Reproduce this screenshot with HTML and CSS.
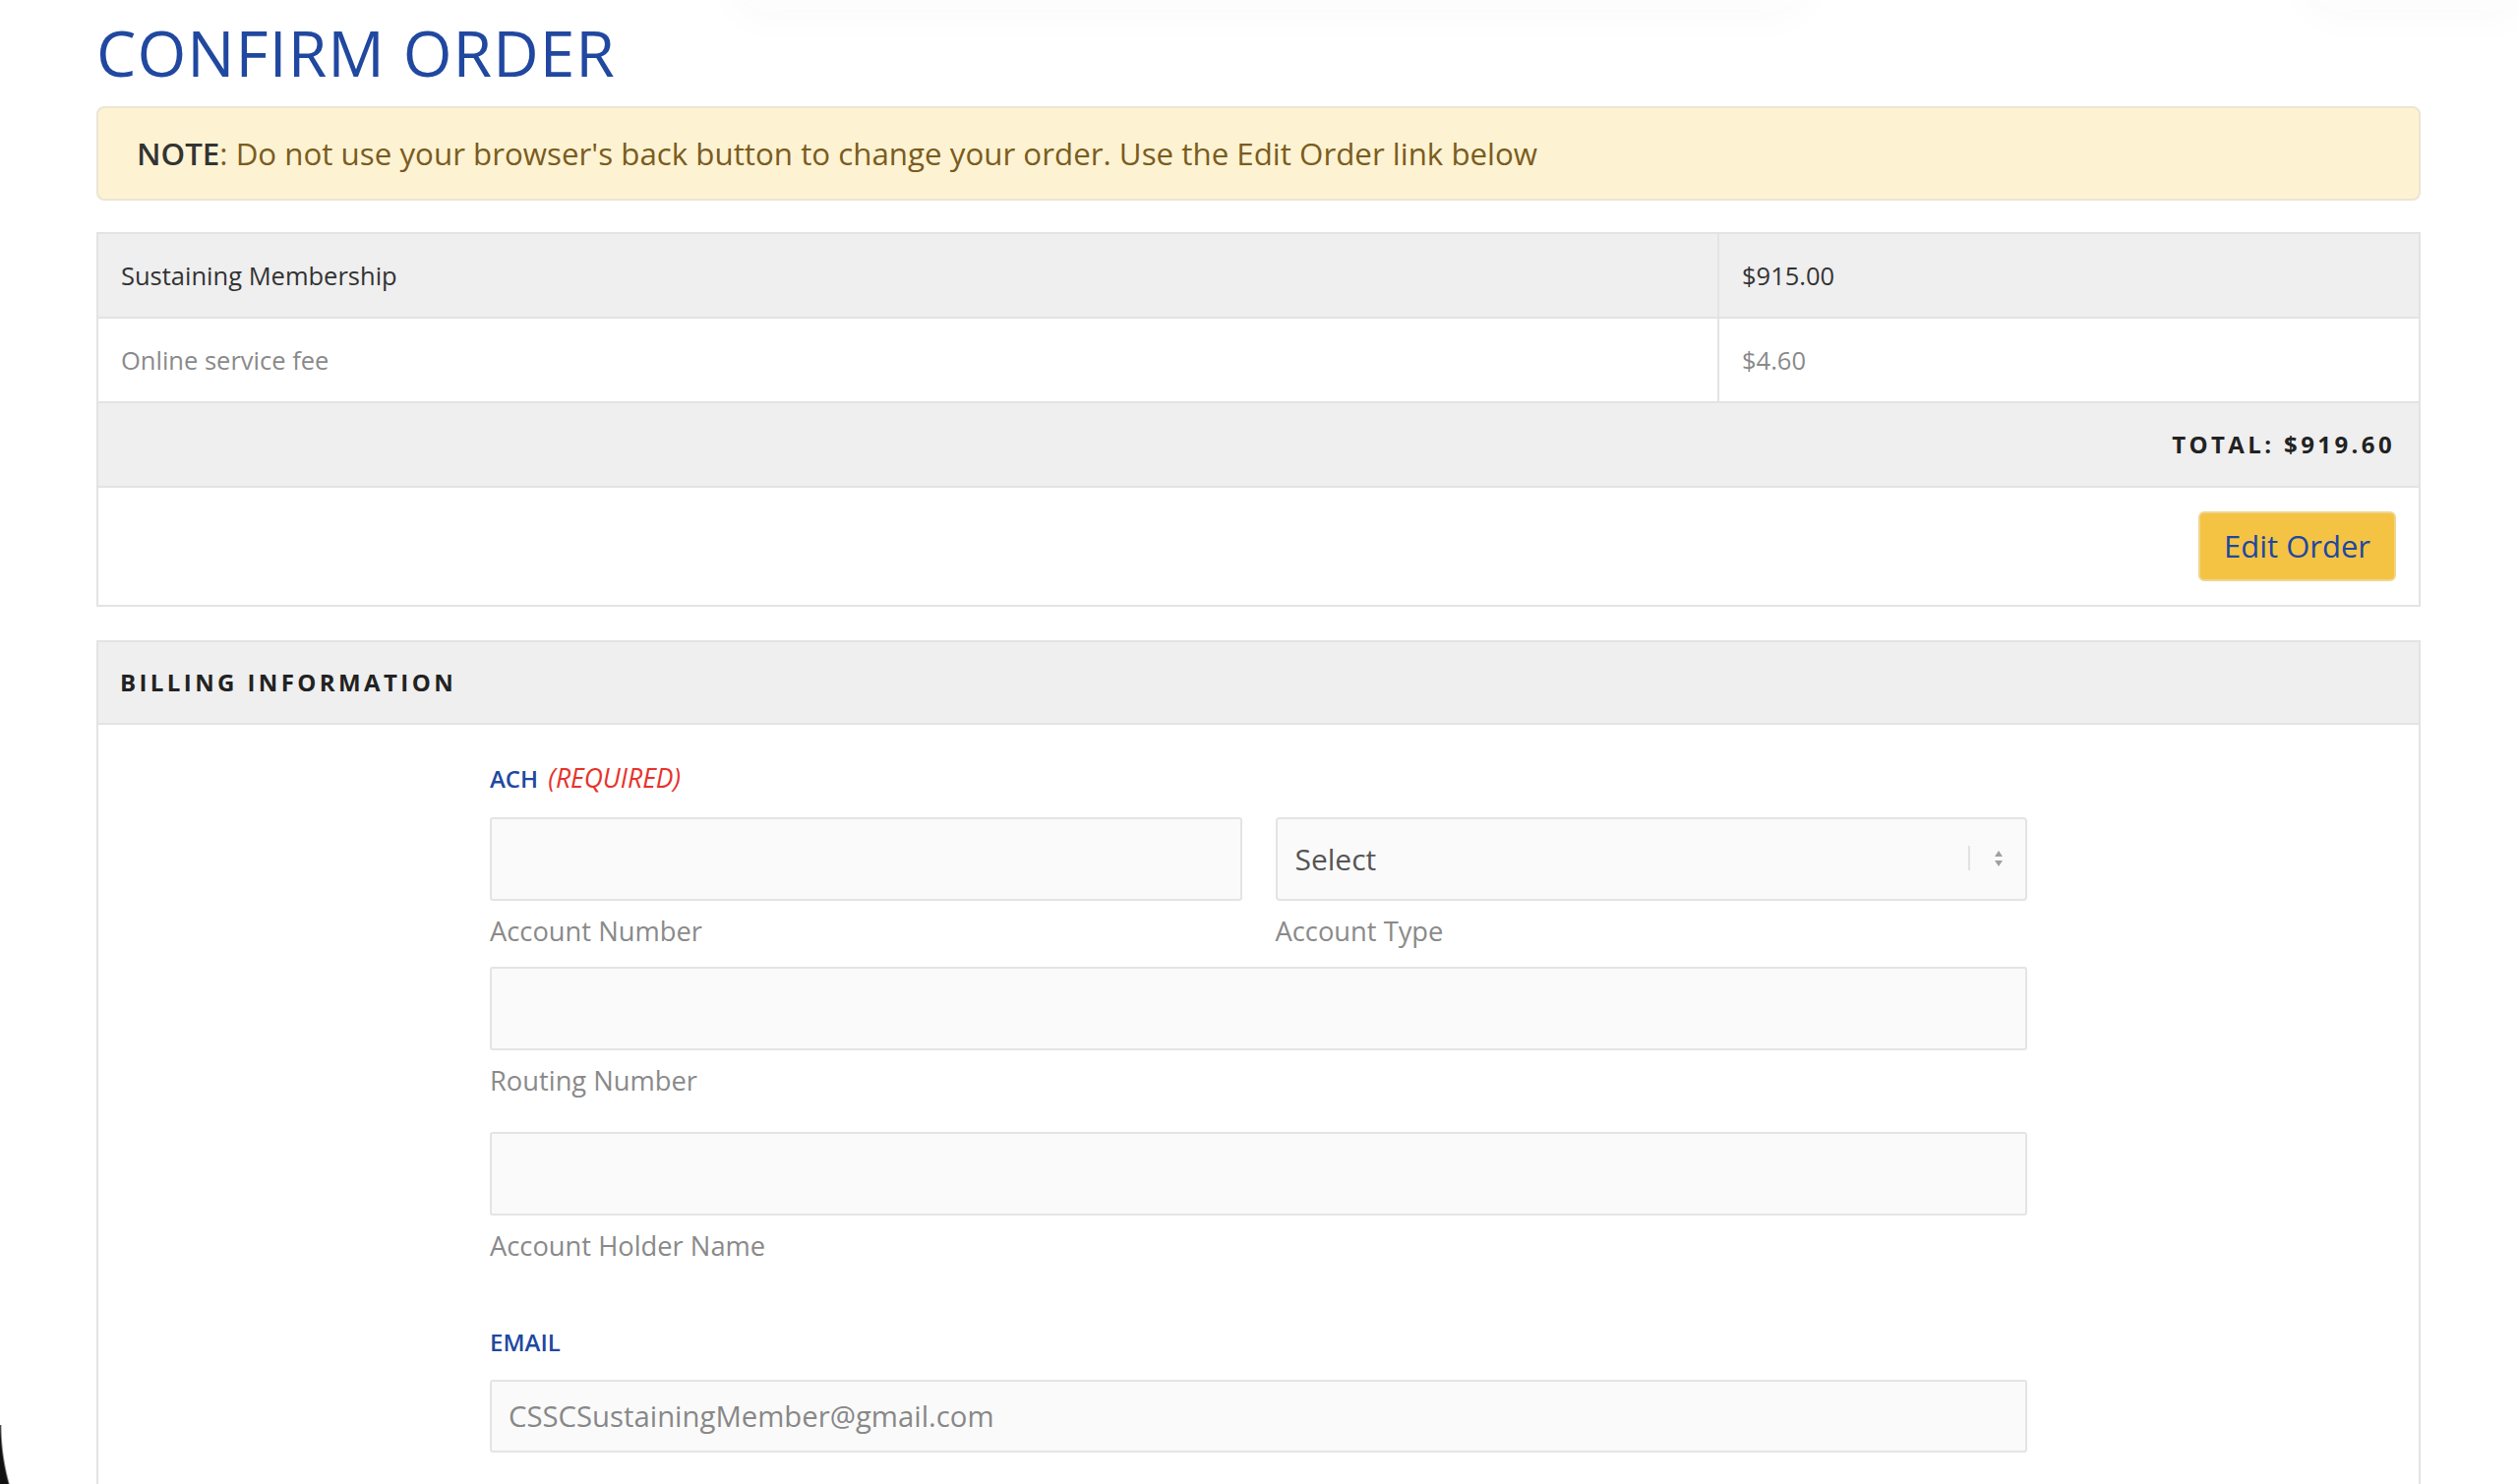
FILE: index.html
```html
<!DOCTYPE html>
<html lang="en">
<head>
    <meta charset="UTF-8">
    <meta name="viewport" content="width=device-width, initial-scale=1.0">
    <title>Confirm Order</title>
    <link rel="stylesheet" href="styles.css">
</head>
<body>
    <div class="top-shade shade-left"></div>
    <div class="top-shade shade-right"></div>

    <main class="page">
        <h1 class="page-title">CONFIRM ORDER</h1>

        <div class="note">
            <strong>NOTE</strong>: Do not use your browser's back button to change your order. Use the Edit Order link below
        </div>

        <table class="order-table">
            <tr class="row-shaded">
                <td class="item-col">Sustaining Membership</td>
                <td>$915.00</td>
            </tr>
            <tr class="row-muted">
                <td class="item-col">Online service fee</td>
                <td>$4.60</td>
            </tr>
            <tr class="row-shaded">
                <td colspan="2" class="total-cell">TOTAL: $919.60</td>
            </tr>
            <tr>
                <td colspan="2" class="action-cell">
                    <button class="edit-btn" type="button">Edit Order</button>
                </td>
            </tr>
        </table>

        <section class="panel">
            <div class="panel-heading">BILLING INFORMATION</div>
            <div class="panel-body">
                <form class="billing-form">
                    <div class="field-title">ACH <em class="required">(REQUIRED)</em></div>

                    <div class="field-row two-col">
                        <div class="field">
                            <input class="text-input" type="text">
                            <label class="field-label">Account Number</label>
                        </div>
                        <div class="field">
                            <div class="select-box">
                                <select class="select-input">
                                    <option>Select</option>
                                    <option>Checking</option>
                                    <option>Savings</option>
                                </select>
                                <span class="select-sep"></span>
                                <span class="select-caret"></span>
                            </div>
                            <label class="field-label">Account Type</label>
                        </div>
                    </div>

                    <div class="field-row routing-row">
                        <input class="text-input" type="text">
                        <label class="field-label">Routing Number</label>
                    </div>

                    <div class="field-row holder-row">
                        <input class="text-input" type="text">
                        <label class="field-label">Account Holder Name</label>
                    </div>

                    <div class="field-title email-title">EMAIL</div>
                    <div class="field-row">
                        <input class="text-input email-input" type="email" value="CSSCSustainingMember@gmail.com">
                    </div>
                </form>
            </div>
        </section>
    </main>

    <div class="window-corner"></div>
</body>
</html>
```

FILE: styles.css
```css
html, body {
    height: 100%;
}
body {
    font-family: "Open Sans", "Liberation Sans", Arial, sans-serif;
    margin: 0;
    padding: 0;
    background-color: #fff;
    color: #333;
    overflow: hidden;
}
.page {
    padding: 0 99px 0 98px;
}

/* faint shadows of the cut-off bar above */
.top-shade {
    position: absolute;
    top: -70px;
    height: 80px;
    border-radius: 40px;
    box-shadow: 0 10px 40px rgba(0,0,0,0.025);
    background: #fdfdfd;
}
.shade-left {
    left: 740px;
    width: 1100px;
}
.shade-right {
    left: 2340px;
    width: 220px;
    border-radius: 40px 0 0 40px;
}

.page-title {
    font-size: 64px;
    font-weight: 400;
    line-height: normal;
    color: #2148a0;
    margin: 10px 0 11px;
    letter-spacing: 1.1px;
}

.note {
    background-color: #fdf3d3;
    border: 2px solid #ebe5d3;
    border-radius: 8px;
    padding: 25px 39px;
    font-size: 31.3px;
    line-height: 42px;
    color: #7b5c1e;
}
.note strong {
    color: #333;
    font-weight: 600;
}

.order-table {
    width: 100%;
    margin-top: 32px;
    border-collapse: collapse;
    border: 2px solid #e3e3e6;
    font-size: 25.5px;
}
.order-table td {
    border: 2px solid #e3e3e6;
    padding: 22px 23px;
    line-height: 40px;
}
.item-col {
    width: 1600px;
}
.row-shaded td {
    background-color: #efefef;
}
.row-muted td {
    color: #8a8a8a;
}
.order-table .total-cell {
    text-align: right;
    font-size: 24px;
    font-weight: 700;
    letter-spacing: 3.4px;
    color: #222;
    padding-right: 24px;
}
.order-table .action-cell {
    text-align: right;
    padding: 24px 23px 24px 24px;
    line-height: 0;
}
.edit-btn {
    font-family: inherit;
    font-size: 31px;
    line-height: 45px;
    color: #2047a1;
    background-color: #f5c343;
    border: 2px solid #efd58e;
    border-radius: 6px;
    padding: 11px 24px;
    cursor: pointer;
}

.panel {
    margin-top: 34px;
    border: 2px solid #e3e3e6;
    border-bottom: none;
}
.panel-heading {
    background-color: #efefef;
    border-bottom: 2px solid #e3e3e6;
    padding: 24px 22px;
    font-size: 24px;
    line-height: 34px;
    font-weight: 700;
    letter-spacing: 3.4px;
    color: #222;
}
.panel-body {
    padding: 36px 0 200px;
}
.billing-form {
    width: 1563px;
    margin: 0 auto;
}
.field-title {
    font-size: 24px;
    line-height: 36px;
    font-weight: 600;
    color: #2148a0;
    margin-bottom: 21px;
}
.required {
    font-size: 26.5px;
    font-weight: 400;
    color: #e8322b;
    margin-left: 4px;
}
.field-row {
    display: flex;
    flex-direction: column;
}
.two-col {
    display: grid;
    grid-template-columns: 1fr 1fr;
    gap: 34px;
    margin-bottom: 17px;
}
.field {
    display: flex;
    flex-direction: column;
}
.routing-row {
    margin-bottom: 33px;
}
.holder-row {
    margin-bottom: 61px;
}
.email-title {
    margin-bottom: 20px;
}
.text-input {
    box-sizing: border-box;
    width: 100%;
    height: 85px;
    border: 2px solid #e4e4e4;
    border-radius: 3px;
    background-color: #fafafa;
    font-family: inherit;
    font-size: 29.3px;
    color: #888;
    padding: 0 17px;
    outline: none;
}
.email-input {
    height: 74px;
}
.field-label {
    font-size: 27.3px;
    line-height: 38px;
    color: #8a8a8a;
    margin-top: 12px;
}

.select-box {
    position: relative;
}
.select-input {
    box-sizing: border-box;
    width: 100%;
    height: 85px;
    border: 2px solid #e4e4e4;
    border-radius: 4px;
    background-color: #fafafa;
    font-family: inherit;
    font-size: 30px;
    color: #555;
    padding: 0 18px;
    appearance: none;
    -webkit-appearance: none;
    outline: none;
}
.select-sep {
    position: absolute;
    right: 58px;
    top: 29px;
    width: 2px;
    height: 25px;
    background-color: #e2e2e2;
}
.select-caret {
    position: absolute;
    right: 25px;
    top: 34px;
    width: 0;
    height: 0;
    border-left: 4px solid transparent;
    border-right: 4px solid transparent;
    border-bottom: 6px solid #a0a0a0;
}
.select-caret::after {
    content: "";
    position: absolute;
    left: -4px;
    top: 10px;
    border-left: 4px solid transparent;
    border-right: 4px solid transparent;
    border-top: 6px solid #a0a0a0;
}

/* dark rounded corner of the window behind */
.window-corner {
    position: fixed;
    left: 0;
    bottom: 0;
    width: 10px;
    height: 60px;
    background: radial-gradient(circle 224px at 224px 0, transparent 222px, #111 224px);
}
```
